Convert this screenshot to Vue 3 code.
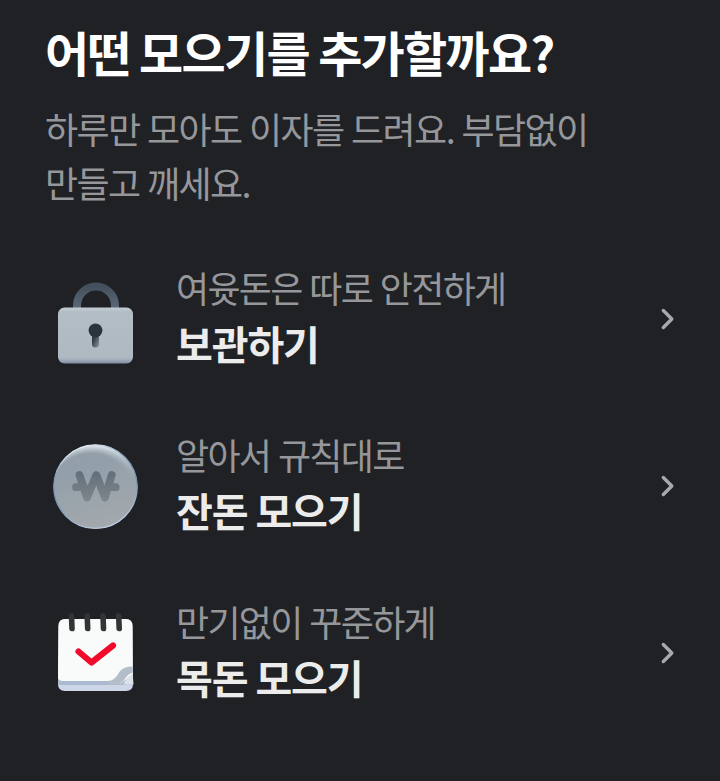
<script setup>
const items = [
  { icon: 'lock', desc: '여윳돈은 따로 안전하게', name: '보관하기' },
  { icon: 'coin', desc: '알아서 규칙대로', name: '잔돈 모으기' },
  { icon: 'calendar', desc: '만기없이 꾸준하게', name: '목돈 모으기' },
]
</script>

<template>
  <main class="sheet">
    <h1>어떤 모으기를 추가할까요?</h1>
    <p class="intro">하루만 모아도 이자를 드려요. 부담없이<br />만들고 깨세요.</p>
    <ul class="list">
      <li v-for="item in items" :key="item.icon" class="row">
        <svg v-if="item.icon === 'lock'" class="icon" viewBox="0 0 90 90">
          <defs>
            <linearGradient id="shackle" x1="0" y1="0" x2="0" y2="1">
              <stop offset="0" stop-color="#434f5c" /><stop offset="1" stop-color="#5d6b7a" />
            </linearGradient>
            <linearGradient id="body" x1="0" y1="0" x2="0" y2="1">
              <stop offset="0" stop-color="#c3cdd5" /><stop offset="0.08" stop-color="#b3bdc5" />
              <stop offset="0.88" stop-color="#afb9c1" /><stop offset="0.93" stop-color="#a3afbd" /><stop offset="1" stop-color="#7e8c9f" />
            </linearGradient>
            <linearGradient id="slot" x1="0" y1="0" x2="1" y2="1">
              <stop offset="0.3" stop-color="#333d47" /><stop offset="1" stop-color="#8e989f" />
            </linearGradient>
          </defs>
          <path d="M27 36V31.500a19 19 0 0 1 38 0V36" fill="none" stroke="url(#shackle)" stroke-width="8" />
          <rect x="8" y="33.500" width="75" height="56" rx="6.500" fill="url(#body)" />
          <path d="M42 60h7v10a3.500 3.500 0 0 1-7 0z" fill="url(#slot)" />
          <circle cx="45.500" cy="56.300" r="6.900" fill="#2b343e" />
        </svg>
        <svg v-else-if="item.icon === 'coin'" class="icon" viewBox="0 0 90 90">
          <defs>
            <linearGradient id="coin" x1="0.3" y1="0" x2="0.6" y2="1">
              <stop offset="0" stop-color="#929fa9" /><stop offset="0.3" stop-color="#93a0aa" /><stop offset="1" stop-color="#a4a9ad" />
            </linearGradient>
            <linearGradient id="rim" x1="0.3" y1="0" x2="0.65" y2="1">
              <stop offset="0" stop-color="#f0f5f9" /><stop offset="0.25" stop-color="#7e98b5" />
              <stop offset="0.6" stop-color="#7690b2" /><stop offset="1" stop-color="#c0d2e8" />
            </linearGradient>
            <radialGradient id="gloss" cx="0.45" cy="0.6" r="0.62">
              <stop offset="0.8" stop-color="#e8eff4" stop-opacity="0" /><stop offset="0.97" stop-color="#eff5fa" stop-opacity="0.9" />
            </radialGradient>
            <linearGradient id="glossFade" x1="0.35" y1="0" x2="0.5" y2="0.55">
              <stop offset="0.2" stop-color="#fff" /><stop offset="1" stop-color="#000" />
            </linearGradient>
            <mask id="glossMask"><rect width="90" height="90" fill="url(#glossFade)" /></mask>
            <linearGradient id="won" gradientUnits="userSpaceOnUse" x1="0" y1="30" x2="0" y2="61">
              <stop offset="0" stop-color="#606f7b" /><stop offset="1" stop-color="#7f868b" />
            </linearGradient>
          </defs>
          <g transform="translate(0 -0.800)">
            <circle cx="45.500" cy="46.500" r="42" fill="url(#coin)" />
            <circle cx="45.500" cy="46.500" r="42" fill="url(#gloss)" mask="url(#glossMask)" />
            <circle cx="45.500" cy="46.500" r="41.700" fill="none" stroke="url(#rim)" stroke-width="1.300" />
            <path d="M29.500 34.800l7.500 22.500 9.300-22.500 8.700 22.500 6.700-22.500M26 47h8M58.500 47h7.200" fill="none" stroke="url(#won)" stroke-width="7.800" stroke-linecap="round" stroke-linejoin="round" />
          </g>
        </svg>
        <svg v-else class="icon" viewBox="0 0 90 90">
          <path d="M8.500 18q0-7 7-7h60q7 0 7 7l.5 58q0 7-7 7H15q-7 0-7-7z" fill="#ccd6e6" />
          <path d="M8 70.500h75V76q-1 1-3 1H11q-2 0-3-1z" fill="#acbad1" />
          <path d="M8.500 18q0-7 7-7h60q7 0 7 7l.2 48-12 9.500L62 73H13q-4 0-5-3z" fill="#f9fbfa" />
          <path d="M82.700 58.500q-9 0-13 5-5 9.500-12 9.500v3.500h9q6-1 9-7 3-4 7-5z" fill="#b4becb" />
          <path d="M82.700 66q-6 2-9 10.500h9.800z" fill="#dce1e7" />
          <path d="M28.500 43.500l13 11L63 37.500" fill="none" stroke="#f00b2d" stroke-width="6.200" stroke-linecap="round" stroke-linejoin="round" />
          <path d="M21.500 8l.5 12.500M37.200 8l.5 12.500M53 8l.5 12.500M68.700 8l.5 12.500" stroke="#303638" stroke-width="5.600" stroke-linecap="round" />
        </svg>
        <div class="copy"><span class="desc">{{ item.desc }}</span><strong>{{ item.name }}</strong></div>
        <svg class="chevron" viewBox="0 0 16 24"><path d="M4.300 3.500l8.500 8.500-8.500 8.500" /></svg>
      </li>
    </ul>
  </main>
</template>

<style>
body { background: #1f2125; }
</style>
<style scoped>
.sheet { box-sizing: border-box; min-height: 781px; padding: 21px 45px 0; background: #1f2125; font-family: "Noto Sans CJK KR", sans-serif; }
h1 { margin: 0; font-size: 48px; line-height: 60px; font-weight: 700; color: #fff; letter-spacing: -1.700px; white-space: nowrap; }
.intro { margin: 20px 0 0; font-size: 36px; line-height: 54px; letter-spacing: -1.600px; word-spacing: 1px; color: #96979b; white-space: nowrap; }
.list { list-style: none; margin: 26px 0 0; padding: 0; }
.row { display: flex; align-items: center; height: 167px; }
.icon { width: 90px; height: 90px; margin-left: 5px; flex: none; }
.copy { display: flex; flex-direction: column; flex: 1; margin-left: 36px; padding-bottom: 8px; white-space: nowrap; }
.desc { font-size: 36px; line-height: 56px; letter-spacing: -1.700px; word-spacing: 1.300px; color: #96979b; }
strong { font-size: 40px; line-height: 56px; font-weight: 700; letter-spacing: -1.100px; color: #ececed; }
.chevron { width: 16px; height: 24px; flex: none; }
.chevron path { fill: none; stroke: #a8a9ac; stroke-width: 3.400; stroke-linecap: round; stroke-linejoin: round; }
</style>
